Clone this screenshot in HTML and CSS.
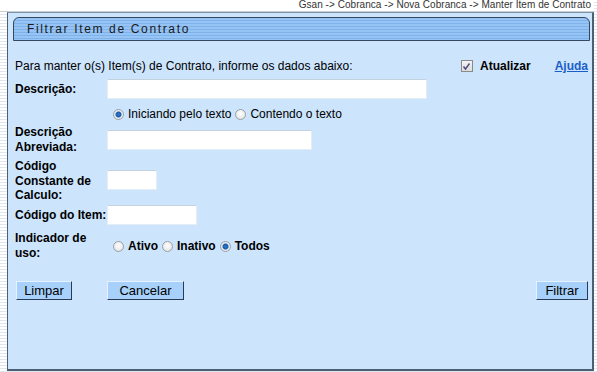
FILE: index.html
```html
<!DOCTYPE html>
<html lang="pt">
<head>
<meta charset="utf-8">
<title>Filtrar Item de Contrato</title>
<link rel="stylesheet" href="styles.css">
</head>
<body>
<div class="page">
  <div class="crumbs">Gsan -&gt; Cobranca -&gt; Nova Cobranca -&gt; Manter Item de Contrato</div>
  <div class="panel">
    <div class="titlebar"><span class="title">Filtrar Item de Contrato</span></div>
    <div class="intro">
      <span class="intro-text">Para manter o(s) Item(s) de Contrato, informe os dados abaixo:</span>
      <span class="intro-right">
        <span class="check"><svg width="9" height="9" viewBox="0 0 9 9"><path d="M1.5 4.5 L3.5 7 L7.5 1.5" fill="none" stroke="#4a4a7a" stroke-width="1.4"/></svg></span>
        <span class="bold atual">Atualizar</span>
        <a class="help" href="#">Ajuda</a>
      </span>
    </div>
    <div class="form">
      <div class="label l1">Descrição:</div>
      <div class="field"><span class="input w-desc"></span></div>

      <div class="label"></div>
      <div class="field radios r1">
        <span class="radio on"></span><span class="rtext">Iniciando pelo texto</span>
        <span class="radio"></span><span class="rtext">Contendo o texto</span>
      </div>

      <div class="label">Descrição<br>Abreviada:</div>
      <div class="field top abrev"><span class="input w-abrev"></span></div>

      <div class="label">Código<br>Constante de<br>Calculo:</div>
      <div class="field top const"><span class="input w-const"></span></div>

      <div class="label l1">Código do Item:</div>
      <div class="field"><span class="input w-item"></span></div>

      <div class="label ind">Indicador de<br>uso:</div>
      <div class="field radios r2 bold">
        <span class="radio"></span><span class="rtext">Ativo</span>
        <span class="radio"></span><span class="rtext">Inativo</span>
        <span class="radio on"></span><span class="rtext">Todos</span>
      </div>
    </div>
    <div class="actions">
      <div class="left-actions">
        <button class="btn b-limpar">Limpar</button>
        <button class="btn b-cancel">Cancelar</button>
      </div>
      <button class="btn b-filtrar">Filtrar</button>
    </div>
  </div>
</div>
</body>
</html>
```
FILE: styles.css
```css
html, body {
  margin: 0;
  padding: 0;
}
body {
  width: 597px;
  height: 372px;
  overflow: hidden;
  background: #ffffff repeating-linear-gradient(to bottom, #ffffff 0, #ffffff 2px, #dfe6ee 2px, #dfe6ee 3px);
  font-family: "Liberation Sans", Arial, sans-serif;
  font-size: 12px;
  color: #000;
}
.page {
  position: relative;
  padding-left: 7px;
  padding-right: 3px;
}
.crumbs {
  height: 11px;
  background: #fff;
  border-bottom: 1px solid #c9ced4;
  margin-left: -7px;
  padding-right: 3px;
  text-align: right;
  font-size: 10px;
  line-height: 10px;
  color: #333;
  letter-spacing: 0.05px;
}
.panel {
  box-sizing: border-box;
  height: 359px;
  background: #cce4fc;
  border: 1px solid #4d5f73;
  border-top-color: #7f93a8;
  border-right-width: 2px;
  border-bottom-width: 2px;
  padding: 4px 2px 0 5px;
  display: flex;
  flex-direction: column;
}
.titlebar {
  height: 24px;
  box-sizing: border-box;
  border: 1px solid #35485e;
  border-radius: 6px 6px 0 0;
  background: #8dbdf2 repeating-linear-gradient(to bottom, #96c4f5 0, #96c4f5 2px, #7fb1eb 2px, #7fb1eb 3px);
  display: flex;
  align-items: center;
  padding-left: 13px;
}
.title {
  font-size: 12px;
  letter-spacing: 1.65px;
  color: #1a1a1a;
}
.intro {
  display: flex;
  justify-content: space-between;
  align-items: center;
  margin-top: 18px;
  padding-left: 2px;
  padding-right: 2px;
  height: 14px;
}
.intro-right {
  display: flex;
  align-items: center;
}
.check {
  width: 12px;
  height: 12px;
  box-sizing: border-box;
  border: 1px solid #8a8a8a;
  background: linear-gradient(#f4f4f4, #dcdcdc);
  display: flex;
  align-items: center;
  justify-content: center;
}
.atual {
  margin-left: 7px;
  margin-right: 24px;
  font-size: 12px;
}
.bold { font-weight: bold; }
.help {
  color: #1a5fc8;
  font-weight: bold;
  text-decoration: underline;
}
.form {
  display: grid;
  grid-template-columns: 92px 1fr;
  grid-template-rows: 20px 26px 34px 46px 20px 36px;
  margin-top: 6px;
  padding-left: 2px;
}
.label {
  font-weight: bold;
  line-height: 14.5px;
}
.label.l1 { align-self: center; }
.label.ind { margin-top: 6px; }
.field {
  display: flex;
  align-items: center;
}
.field.top { align-items: flex-start; }
.abrev { padding-top: 5px; }
.const { padding-top: 11px; }
.input {
  display: block;
  height: 20px;
  box-sizing: border-box;
  background: #fff;
  border: 1px solid #e4edf6;
  border-top-color: #c4d2e0;
}
.w-desc { width: 320px; }
.w-abrev { width: 205px; }
.w-const { width: 50px; }
.w-item { width: 90px; }
.radios { padding-left: 6px; }
.r1 { padding-top: 4px; }
.r2 { padding-top: 6px; }
.radio {
  width: 11px;
  height: 11px;
  box-sizing: border-box;
  border-radius: 50%;
  border: 1px solid #9aa0a6;
  background: radial-gradient(circle at 50% 40%, #ffffff 0, #e4e4e4 80%);
  margin-right: 4px;
}
.radio.on {
  background: radial-gradient(circle, #2a7fd0 0, #1a5aa8 2.5px, #e8eef4 3.5px, #d8dde2 100%);
}
.rtext { margin-right: 4px; }
.actions {
  display: flex;
  justify-content: space-between;
  margin-top: 20px;
  padding-left: 3px;
  padding-right: 2px;
}
.left-actions { display: flex; gap: 35px; }
.btn {
  font-family: "Liberation Sans", Arial, sans-serif;
  font-size: 13px;
  height: 19px;
  padding: 0;
  background: #a7d0fa;
  border: 1px solid;
  border-color: #e6f2ff #2b3b55 #2b3b55 #e6f2ff;
  color: #000;
}
.b-limpar { width: 56px; }
.b-cancel { width: 77px; }
.b-filtrar { width: 52px; }
```
